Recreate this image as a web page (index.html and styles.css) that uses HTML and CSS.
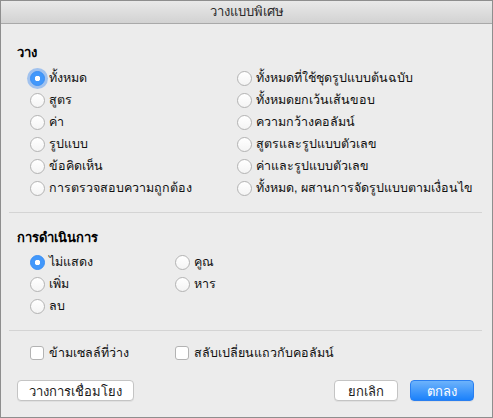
FILE: index.html
```html
<!DOCTYPE html>
<html>
  <head>
    <title>วางแบบพิเศษ</title>
    <link rel="stylesheet" href="styles.css">
  </head>
  <body>
    <div class="dialog">
      <div class="titlebar">วางแบบพิเศษ</div>

      <div class="section paste">
        <div class="heading">วาง</div>
        <div class="options cols-paste">
          <label class="opt"><span class="radio on focus"></span>ทั้งหมด</label>
          <label class="opt"><span class="radio"></span>ทั้งหมดที่ใช้ชุดรูปแบบต้นฉบับ</label>
          <label class="opt"><span class="radio"></span>สูตร</label>
          <label class="opt"><span class="radio"></span>ทั้งหมดยกเว้นเส้นขอบ</label>
          <label class="opt"><span class="radio"></span>ค่า</label>
          <label class="opt"><span class="radio"></span>ความกว้างคอลัมน์</label>
          <label class="opt"><span class="radio"></span>รูปแบบ</label>
          <label class="opt"><span class="radio"></span>สูตรและรูปแบบตัวเลข</label>
          <label class="opt"><span class="radio"></span>ข้อคิดเห็น</label>
          <label class="opt"><span class="radio"></span>ค่าและรูปแบบตัวเลข</label>
          <label class="opt"><span class="radio"></span>การตรวจสอบความถูกต้อง</label>
          <label class="opt"><span class="radio"></span>ทั้งหมด, ผสานการจัดรูปแบบตามเงื่อนไข</label>
        </div>
      </div>

      <hr class="sep">

      <div class="section operation">
        <div class="heading">การดำเนินการ</div>
        <div class="options cols-op">
          <label class="opt"><span class="radio on"></span>ไม่แสดง</label>
          <label class="opt"><span class="radio"></span>คูณ</label>
          <label class="opt"><span class="radio"></span>เพิ่ม</label>
          <label class="opt"><span class="radio"></span>หาร</label>
          <label class="opt"><span class="radio"></span>ลบ</label>
        </div>
      </div>

      <hr class="sep">

      <div class="options cols-op checks">
        <label class="opt"><span class="check"></span>ข้ามเซลล์ที่ว่าง</label>
        <label class="opt"><span class="check"></span>สลับเปลี่ยนแถวกับคอลัมน์</label>
      </div>

      <div class="buttons">
        <button class="btn">วางการเชื่อมโยง</button>
        <span class="spacer"></span>
        <button class="btn cancel">ยกเลิก</button>
        <button class="btn ok">ตกลง</button>
      </div>
    </div>
  </body>
</html>
```

FILE: styles.css
```css
body {
  margin: 0;
  font-family: "Liberation Sans", "Noto Sans", sans-serif;
  font-size: 13px;
  color: #1a1a1a;
  background: #ececec;
}
.dialog {
  width: 491px;
  height: 416px;
  border: 1px solid #8e8e8e;
  background: #ececec;
}
.titlebar {
  height: 22px;
  line-height: 22px;
  text-align: center;
  color: #2a2a2a;
  background: linear-gradient(#e9e9e9, #d2d2d2);
  border-bottom: 1px solid #a9a9a9;
}
.section {
  padding-left: 16px;
}
.paste {
  padding-top: 21px;
}
.heading {
  font-weight: bold;
  height: 16px;
  line-height: 16px;
  color: #000;
}
.paste .options {
  margin-top: 6px;
}
.operation .heading {
  margin-top: 17px;
}
.operation .options {
  margin-top: 5px;
}
.options {
  display: grid;
  padding-left: 13px;
}
.cols-paste {
  grid-template-columns: 207px auto;
}
.cols-op {
  grid-template-columns: 145px auto;
}
.opt {
  display: flex;
  align-items: center;
  height: 22px;
  font-size: 12.5px;
  color: #111;
  white-space: nowrap;
}
.radio {
  box-sizing: border-box;
  width: 15px;
  height: 15px;
  margin-right: 4px;
  border-radius: 50%;
  border: 1px solid #b3b3b3;
  background: linear-gradient(#ffffff, #f4f4f4);
  flex: none;
}
.radio.on {
  border-color: #3a8ff5;
  background: #4298fb radial-gradient(circle, #fff 0 2.5px, transparent 3px);
}
.radio.focus {
  box-shadow: 0 0 0 3px rgba(100, 160, 240, 0.55);
}
.check {
  box-sizing: border-box;
  width: 14px;
  height: 14px;
  margin-right: 5px;
  border: 1px solid #b3b3b3;
  border-radius: 3px;
  background: #fff;
  flex: none;
}
.sep {
  border: 0;
  border-top: 1px solid #d4d4d4;
  margin: 13px 10px 0 8px;
  height: 0;
}
.checks {
  padding-left: 29px;
  margin-top: 11px;
}
.buttons {
  display: flex;
  margin: 16px 18px 0 16px;
}
.spacer {
  flex: 1;
}
.btn {
  height: 21px;
  padding: 0;
  font-family: inherit;
  font-size: 13px;
  color: #1a1a1a;
  background: #fff;
  border: 1px solid #c4c4c4;
  border-radius: 4px;
  box-shadow: 0 1px 0 rgba(0, 0, 0, 0.05);
}
.buttons .btn:first-child {
  width: 117px;
}
.cancel {
  width: 64px;
  margin-right: 12px;
}
.ok {
  width: 64px;
  color: #fff;
  border-color: #2a7ff0;
  background: linear-gradient(#6db3fb, #1b81fb);
}
```
